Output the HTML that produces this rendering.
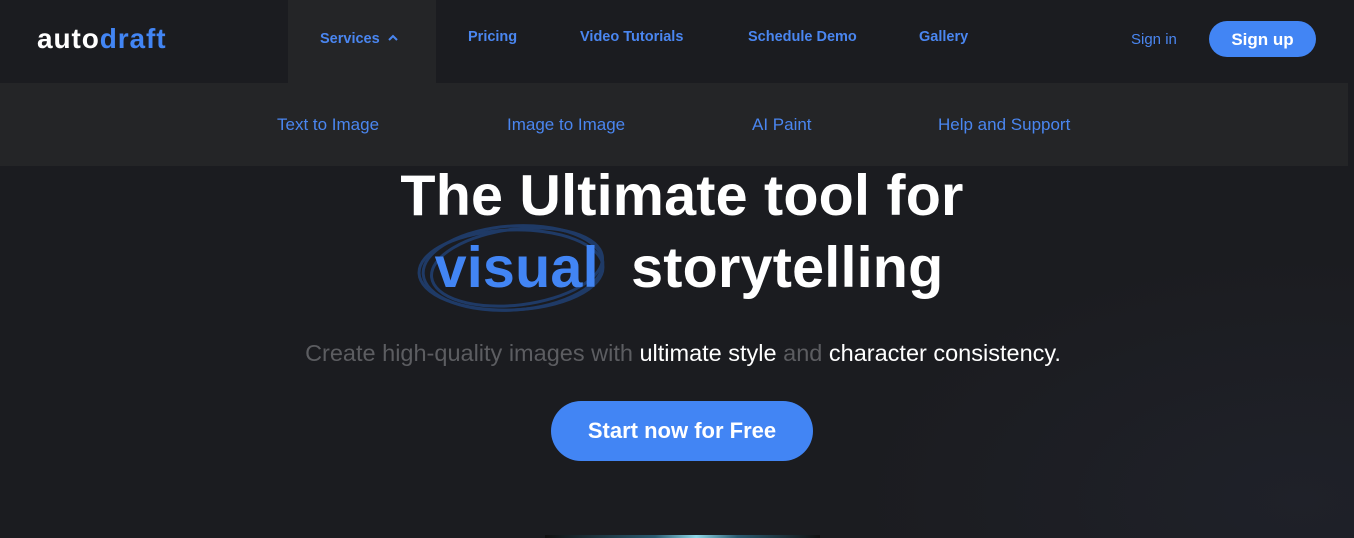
<!DOCTYPE html>
<html><head><meta charset="utf-8"><style>
*{margin:0;padding:0;box-sizing:border-box}
body{width:1354px;height:538px;overflow:hidden;background:#1b1c20;font-family:"Liberation Sans",sans-serif;position:relative}
.bg{position:absolute;inset:0;background:radial-gradient(ellipse 450px 250px at 1300px 500px,#1f2129 0%,rgba(27,28,32,0) 100%)}
.nav{position:absolute;left:0;top:0;width:1354px;height:83px;background:#1b1c20}
.logo{position:absolute;left:37px;top:23px;font-size:28px;font-weight:bold;letter-spacing:0.9px}
.logo .a{color:#fff}.logo .d{color:#4285f4}
.svc{position:absolute;left:288px;top:0;width:148px;height:83px;background:#242527}
.ni{position:absolute;color:#4a86f0;font-size:14.5px;font-weight:bold}
.sub{position:absolute;left:0;top:83px;width:1348px;height:83px;background:#242527}
.si{position:absolute;top:115px;color:#4a86f0;font-size:17px}
.signin{position:absolute;left:1131px;top:31px;color:#4a86f0;font-size:15px}
.signup{position:absolute;left:1209px;top:21px;width:107px;height:36px;border-radius:18px;background:#4285f4;color:#fff;font-weight:bold;font-size:17px;text-align:center;line-height:38px}
h1{position:absolute;left:0;width:1354px;text-align:center;color:#fff;font-size:57.5px;font-weight:bold;letter-spacing:0.2px}
.v{color:#4285f4}
.p{position:absolute;top:340px;width:1354px;text-align:center;font-size:23.5px;color:#5c5d61;left:6px}
.p b{color:#fff;font-weight:normal}
.cta{position:absolute;left:551px;top:401px;width:262px;height:60px;border-radius:30px;background:#4285f4;color:#fff;font-weight:bold;font-size:22px;text-align:center;line-height:60px}
.glow{position:absolute;left:545px;top:535px;width:275px;height:3px;background:linear-gradient(90deg,#111 0%,#2a5a70 40%,#8fd8e8 55%,#2a5a70 70%,#111 100%)}
</style></head><body>
<div class="bg"></div>
<div class="nav">
<div class="logo"><span class="a">auto</span><span class="d">draft</span></div>
<div class="svc"></div>
<div class="ni" style="left:320px;top:31px">Services <svg width="12" height="10" viewBox="0 0 12 10" style="margin-left:3px"><path d="M2 7 L6 3 L10 7" stroke="#4a86f0" stroke-width="2" fill="none"/></svg></div>
<div class="ni" style="left:468px;top:29px">Pricing</div>
<div class="ni" style="left:580px;top:29px">Video Tutorials</div>
<div class="ni" style="left:748px;top:29px">Schedule Demo</div>
<div class="ni" style="left:919px;top:29px">Gallery</div>
<div class="signin">Sign in</div>
<div class="signup">Sign up</div>
</div>
<div class="sub"></div>
<div class="si" style="left:277px">Text to Image</div>
<div class="si" style="left:507px">Image to Image</div>
<div class="si" style="left:752px">AI Paint</div>
<div class="si" style="left:938px">Help and Support</div>
<h1 style="top:163px;left:5px">The Ultimate tool for</h1>
<svg style="position:absolute;left:417px;top:218px" width="200" height="100"><g fill="none" stroke="#1f3a66" stroke-width="3"><ellipse cx="96" cy="50" rx="90" ry="42" transform="rotate(-4 96 50)"/><ellipse cx="100" cy="49" rx="86" ry="38" transform="rotate(-7 100 49)"/><ellipse cx="94" cy="52" rx="92" ry="40" transform="rotate(-2 94 52)"/></g></svg>
<h1 style="top:235px;left:12px"><span class="v">visual</span>&nbsp; storytelling</h1>
<div class="p">Create high-quality images with <b>ultimate style</b> and <b>character consistency.</b></div>
<div class="cta">Start now for Free</div>
<div class="glow"></div>
</body></html>
